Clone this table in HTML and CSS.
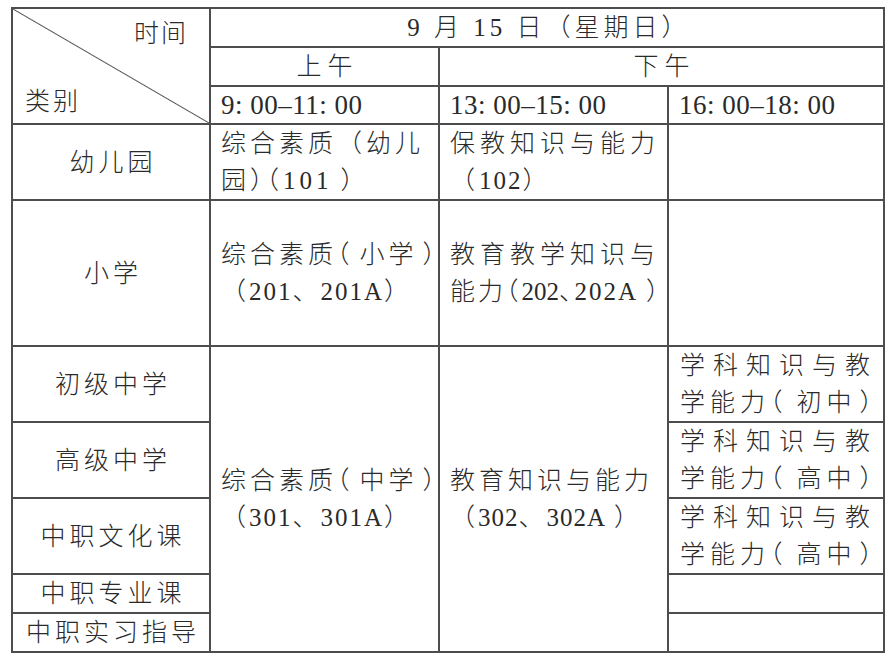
FILE: index.html
```html
<!DOCTYPE html>
<html lang="zh-CN">
<head>
<meta charset="utf-8">
<title>考试时间安排</title>
<link rel="stylesheet" href="styles.css">
</head>
<body>
<div class="sheet">
  <div class="cell corner span-r3">
    <span class="corner-top">时间</span>
    <span class="corner-bottom">类别</span>
  </div>
  <div class="cell center date span-c3">9 月 15 日（星期日）</div>
  <div class="cell center wide">上午</div>
  <div class="cell center wide span-c2">下午</div>
  <div class="cell left time">9: 00–11: 00</div>
  <div class="cell left time">13: 00–15: 00</div>
  <div class="cell left time">16: 00–18: 00</div>

  <div class="cell center cat">幼儿园</div>
  <div class="cell left">
    <span class="ln ls4">综合素质（幼儿</span>
    <span class="ln ls4 halt">园）（<span class="n3">101</span><span class="cp8">）</span></span>
  </div>
  <div class="cell left">
    <span class="ln ls5">保教知识与能力</span>
    <span class="ln ls4">（<span class="n2">102</span>）</span>
  </div>
  <div class="cell"></div>

  <div class="cell center cat">小学</div>
  <div class="cell left">
    <span class="ln ls4 halt">综合素质<span class="op6">（</span>小学<span class="cp5">）</span></span>
    <span class="ln ls3">（<span class="n2">201</span>、<span class="n2">201A</span>）</span>
  </div>
  <div class="cell left">
    <span class="ln ls5">教育教学知识与</span>
    <span class="ln ls3 halt">能力（<span class="n0">202</span>、<span class="n2">202A</span><span class="cp8">）</span></span>
  </div>
  <div class="cell"></div>

  <div class="cell center cat">初级中学</div>
  <div class="cell left span-r5">
    <span class="ln ls4 halt">综合素质<span class="op6">（</span>中学<span class="cp5">）</span></span>
    <span class="ln ls3">（<span class="n2">301</span>、<span class="n2">301A</span>）</span>
  </div>
  <div class="cell left span-r5">
    <span class="ln ls4">教育知识与能力</span>
    <span class="ln ls3">（<span class="n1">302</span>、<span class="n1">302A</span><span class="cp8">）</span></span>
  </div>
  <div class="cell left s4">
    <span class="ln ls8">学科知识与教</span>
    <span class="ln ls5 halt">学能力<span class="op9">（</span>初中<span class="cp3">）</span></span>
  </div>

  <div class="cell center cat">高级中学</div>
  <div class="cell left s4">
    <span class="ln ls8">学科知识与教</span>
    <span class="ln ls5 halt">学能力<span class="op9">（</span>高中<span class="cp3">）</span></span>
  </div>

  <div class="cell center cat">中职文化课</div>
  <div class="cell left s4">
    <span class="ln ls8">学科知识与教</span>
    <span class="ln ls5 halt">学能力<span class="op9">（</span>高中<span class="cp3">）</span></span>
  </div>

  <div class="cell center cat">中职专业课</div>
  <div class="cell"></div>

  <div class="cell center cat">中职实习指导</div>
  <div class="cell"></div>
</div>
</body>
</html>
```

FILE: styles.css
```css
html, body {
  margin: 0;
  padding: 0;
  background: #ffffff;
}

body {
  font-family: "Liberation Serif", "Noto Sans CJK SC", serif;
  font-weight: 300;
  color: #2a2a2a;
  font-size: 25px;
}

.sheet {
  display: grid;
  width: max-content;
  margin: 7px 0 0 11px;
  padding: 2px;
  gap: 2px;
  background: #4d4d4d;
  grid-template-columns: 196px 227px 227px 214px;
  grid-template-rows: 37px 37px 36px 74px 144px 74px 74px 74px 37px 37px;
}

.cell {
  background: #ffffff;
  display: flex;
  flex-direction: column;
  justify-content: center;
  line-height: 37px;
  white-space: nowrap;
  overflow: hidden;
}

.span-r3 { grid-row: span 3; }
.span-r5 { grid-row: span 5; }
.span-c2 { grid-column: span 2; }
.span-c3 { grid-column: span 3; }

.center {
  align-items: center;
  text-align: center;
}

.left {
  align-items: flex-start;
  padding-left: 10px;
}

.corner {
  justify-content: space-between;
  background: linear-gradient(to top right, #ffffff calc(50% - 1px), #555555 50%, #ffffff calc(50% + 1px));
  padding: 13px 0 9px 12px;
  line-height: 24px;
}

.corner-top {
  align-self: flex-end;
  margin-right: 21px;
  letter-spacing: 2px;
}

.corner-bottom {
  align-self: flex-start;
  letter-spacing: 3px;
}

.date {
  letter-spacing: 4px;
  padding-left: 4px;
}

.wide {
  letter-spacing: 6px;
  padding-left: 6px;
}

.time {
  font-size: 27px;
  letter-spacing: 0.5px;
}

.cat {
  letter-spacing: 4px;
  padding-left: 4px;
}

.ln {
  display: block;
}

.ls3 { letter-spacing: 3px; }
.ls4 { letter-spacing: 4px; }
.ls5 { letter-spacing: 5px; }
.ls8 { letter-spacing: 8px; }

.halt {
  font-feature-settings: "halt" 1;
}

.n0 { letter-spacing: 0; }
.n1 { letter-spacing: 1px; }
.n2 { letter-spacing: 2px; }
.n3 { letter-spacing: 4px; }

.op6 { margin-right: 6px; }
.op9 { margin-right: 9px; }
.cp3 { margin-left: 3px; }
.cp5 { margin-left: 5px; }
.cp8 { margin-left: 8px; }

.s4 {
  padding-left: 11px;
}
```
